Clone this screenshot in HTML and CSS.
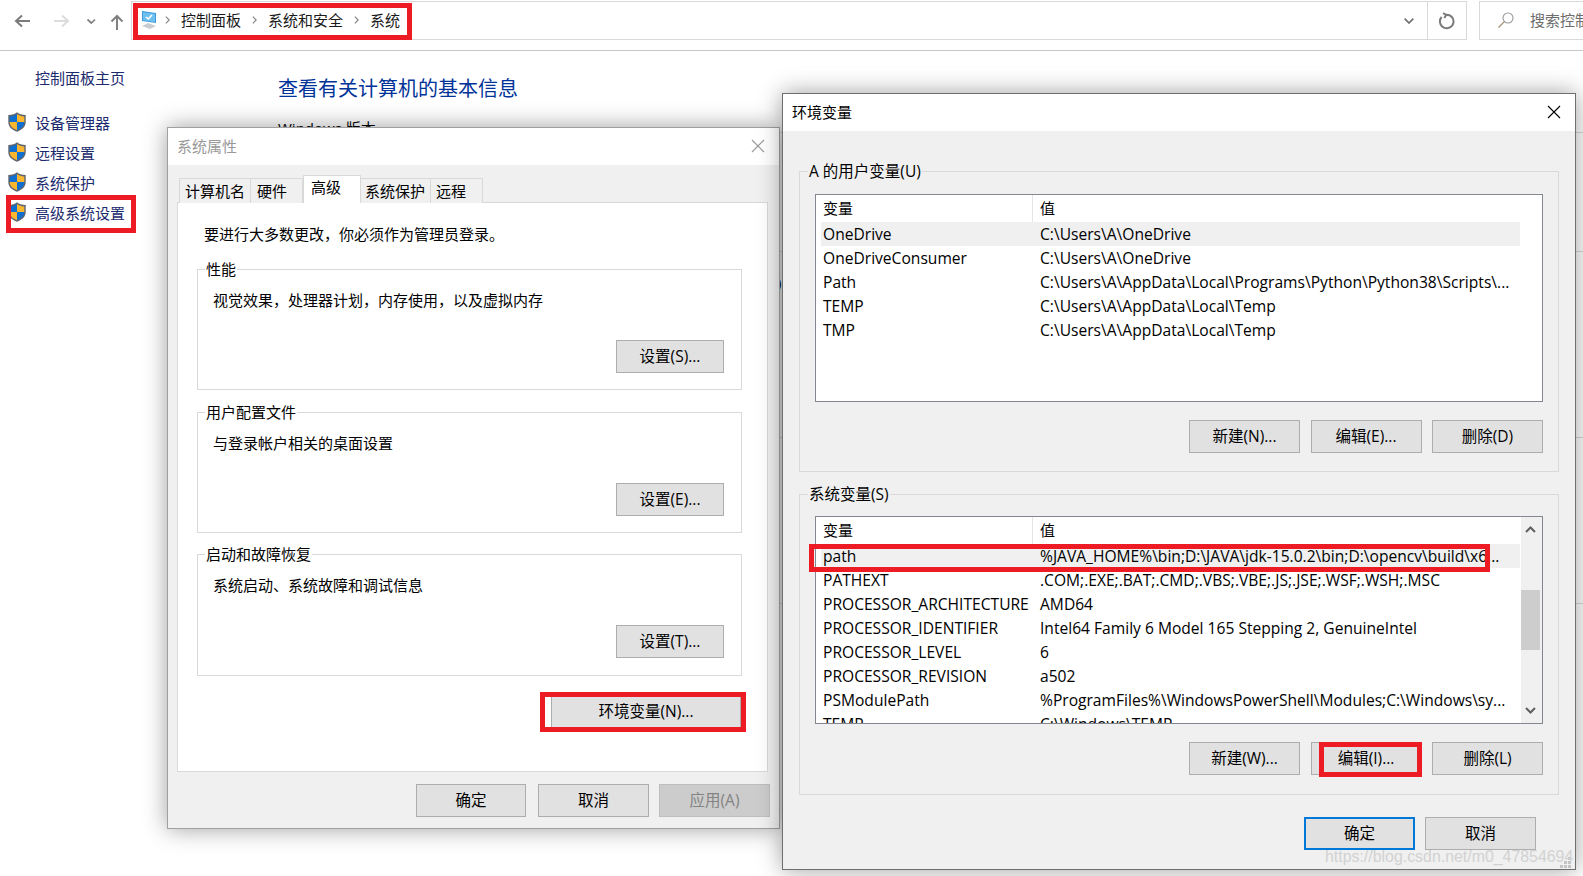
FILE: index.html
```html
<!DOCTYPE html>
<html lang="zh-CN">
<head>
<meta charset="utf-8">
<title>系统</title>
<link rel="stylesheet" href="styles.css">
</head>
<body>
<svg class="defs" width="0" height="0">
  <symbol id="shield" viewBox="0 0 18 20">
    <path d="M9 .3C11 2.100 14 3.100 17.700 3.100V10c0 4.800-3.600 7.800-8.700 9.700C3.900 17.800.3 14.800.3 10V3.100C4 3.100 7 2.100 9 .3Z" fill="#5f6670"/>
    <path d="M9 1.900C7 3.300 4.500 4.200 1.700 4.400V10H9Z" fill="#0f6fd0"/>
    <path d="M9 1.900C11 3.300 13.500 4.200 16.300 4.400V10H9Z" fill="#f9b62e"/>
    <path d="M1.700 10H9V18.200C4.800 16.500 1.700 14 1.700 10Z" fill="#f9b62e"/>
    <path d="M16.300 10H9V18.200C13.200 16.500 16.300 14 16.300 10Z" fill="#0f6fd0"/>
  </symbol>
  <symbol id="close" viewBox="0 0 14 14">
    <path d="M1 1 13 13M13 1 1 13" fill="none" stroke="currentColor" stroke-width="1.100"/>
  </symbol>
  <symbol id="crumb" viewBox="0 0 6 10">
    <path d="M1 1 5 5 1 9" fill="none" stroke="#8a8a8a" stroke-width="1.500"/>
  </symbol>
</svg>

<header class="toolbar">
  <svg class="nav-icons" width="131" height="40" viewBox="0 0 131 40">
    <path d="M30 21H16M22 15.500 16 21 22 26.500" fill="none" stroke="#7b7b7b" stroke-width="2"/>
    <path d="M54 21H68M62 15.500 68 21 62 26.500" fill="none" stroke="#dcdcdc" stroke-width="2"/>
    <path d="M87.500 19.500 91.300 23 95 19.500" fill="none" stroke="#808080" stroke-width="1.700"/>
    <path d="M117 30V16M111.500 21.500 117 16 122.500 21.500" fill="none" stroke="#808080" stroke-width="2"/>
  </svg>
  <div class="address">
    <svg class="pc-icon" width="16" height="20" viewBox="0 0 16 20">
      <path d="M1 1 15 3V13L1 11Z" fill="#3d9ade"/>
      <path d="M2 2.200 14 3.800V12L2 10.200Z" fill="#6fc0ef"/>
      <path d="M5 7 7.300 9 11 5" fill="none" stroke="#fff" stroke-width="1.600"/>
      <path d="M7 13 1 16 9 19 15 16Z" fill="#c9ccd0"/>
    </svg>
    <svg class="chev"><use href="#crumb"/></svg>
    <span class="crumb">控制面板</span>
    <svg class="chev"><use href="#crumb"/></svg>
    <span class="crumb">系统和安全</span>
    <svg class="chev"><use href="#crumb"/></svg>
    <span class="crumb">系统</span>
    <span class="address-fill"></span>
    <svg class="drop" width="10" height="6" viewBox="0 0 10 6"><path d="M.7.7 5 5 9.300.7" fill="none" stroke="#707070" stroke-width="1.700"/></svg>
    <span class="refresh">
      <svg width="18" height="18" viewBox="0 0 18 18"><path d="M8 2.700A6.800 6.800 0 1 1 3.600 5M5 1.200 8.300 2.800 6.300 6" fill="none" stroke="#7b7b7b" stroke-width="2"/></svg>
    </span>
  </div>
  <div class="search">
    <svg width="18" height="18" viewBox="0 0 18 18"><circle cx="11" cy="7" r="5" fill="none" stroke="#9a9a9a" stroke-width="1.100"/><path d="M7.400 10.600 1.500 16.500" stroke="#a08a70" stroke-width="1.200"/></svg>
    <span class="search-text">搜索控制面板</span>
  </div>
</header>

<main class="page">
  <nav class="sidebar">
    <a class="home">控制面板主页</a>
    <a class="side-link"><svg class="shield"><use href="#shield"/></svg>设备管理器</a>
    <a class="side-link"><svg class="shield"><use href="#shield"/></svg>远程设置</a>
    <a class="side-link"><svg class="shield"><use href="#shield"/></svg>系统保护</a>
    <a class="side-link"><svg class="shield"><use href="#shield"/></svg>高级系统设置</a>
  </nav>
  <section class="info">
    <h1>查看有关计算机的基本信息</h1>
    <p>Windows 版本</p>
  </section>
  <section class="rail">
    <div class="rail-a"></div>
    <div class="rail-b"></div>
    <div class="rail-c"><span>)</span></div>
    <div class="rail-d"></div>
  </section>
</main>

<div class="dialog props">
  <div class="titlebar inactive"><span>系统属性</span><svg class="x"><use href="#close"/></svg></div>
  <div class="dialog-body">
    <div class="tabs">
      <span class="tab t1">计算机名</span>
      <span class="tab t2">硬件</span>
      <span class="tab t3 active">高级</span>
      <span class="tab t4">系统保护</span>
      <span class="tab t5">远程</span>
    </div>
    <div class="panel">
      <p class="notice">要进行大多数更改，你必须作为管理员登录。</p>
      <div class="group white">
        <span class="legend">性能</span>
        <p class="group-text">视觉效果，处理器计划，内存使用，以及虚拟内存</p>
        <button class="btn setting">设置(S)...</button>
      </div>
      <div class="group white">
        <span class="legend">用户配置文件</span>
        <p class="group-text">与登录帐户相关的桌面设置</p>
        <button class="btn setting">设置(E)...</button>
      </div>
      <div class="group white last">
        <span class="legend">启动和故障恢复</span>
        <p class="group-text">系统启动、系统故障和调试信息</p>
        <button class="btn setting">设置(T)...</button>
      </div>
      <button class="btn env-btn">环境变量(N)...</button>
    </div>
    <div class="props-foot">
      <button class="btn w-a">确定</button>
      <button class="btn w-b">取消</button>
      <button class="btn w-b disabled">应用(A)</button>
    </div>
  </div>
</div>

<div class="dialog env">
  <div class="titlebar"><span>环境变量</span><svg class="x"><use href="#close"/></svg></div>
  <div class="dialog-body env-body">
    <div class="group gray">
      <span class="legend">A 的用户变量(U)</span>
      <div class="list">
        <div class="rows">
          <div class="row head"><span>变量</span><span>值</span></div>
          <div class="row sel"><span>OneDrive</span><span>C:\Users\A\OneDrive</span></div>
          <div class="row"><span>OneDriveConsumer</span><span>C:\Users\A\OneDrive</span></div>
          <div class="row"><span>Path</span><span>C:\Users\A\AppData\Local\Programs\Python\Python38\Scripts\...</span></div>
          <div class="row"><span>TEMP</span><span>C:\Users\A\AppData\Local\Temp</span></div>
          <div class="row"><span>TMP</span><span>C:\Users\A\AppData\Local\Temp</span></div>
        </div>
      </div>
      <div class="list-btns">
        <button class="btn w-c">新建(N)...</button>
        <button class="btn w-c">编辑(E)...</button>
        <button class="btn w-c">删除(D)</button>
      </div>
    </div>
    <div class="group gray">
      <span class="legend">系统变量(S)</span>
      <div class="list">
        <div class="rows">
          <div class="row head"><span>变量</span><span>值</span></div>
          <div class="row sel"><span>path</span><span>%JAVA_HOME%\bin;D:\JAVA\jdk-15.0.2\bin;D:\opencv\build\x6...</span></div>
          <div class="row"><span>PATHEXT</span><span>.COM;.EXE;.BAT;.CMD;.VBS;.VBE;.JS;.JSE;.WSF;.WSH;.MSC</span></div>
          <div class="row"><span>PROCESSOR_ARCHITECTURE</span><span>AMD64</span></div>
          <div class="row"><span>PROCESSOR_IDENTIFIER</span><span>Intel64 Family 6 Model 165 Stepping 2, GenuineIntel</span></div>
          <div class="row"><span>PROCESSOR_LEVEL</span><span>6</span></div>
          <div class="row"><span>PROCESSOR_REVISION</span><span>a502</span></div>
          <div class="row"><span>PSModulePath</span><span>%ProgramFiles%\WindowsPowerShell\Modules;C:\Windows\sy...</span></div>
          <div class="row"><span>TEMP</span><span>C:\Windows\TEMP</span></div>
        </div>
        <div class="scrollbar">
          <svg width="11" height="7" viewBox="0 0 11 7"><path d="M1 6 5.500 1.500 10 6" fill="none" stroke="#606060" stroke-width="2"/></svg>
          <span class="thumb"></span>
          <svg width="11" height="7" viewBox="0 0 11 7"><path d="M1 1 5.500 5.500 10 1" fill="none" stroke="#606060" stroke-width="2"/></svg>
        </div>
      </div>
      <div class="list-btns">
        <button class="btn w-c">新建(W)...</button>
        <button class="btn w-c">编辑(I)...</button>
        <button class="btn w-c">删除(L)</button>
      </div>
    </div>
    <div class="env-foot">
      <button class="btn w-c primary">确定</button>
      <button class="btn w-c">取消</button>
    </div>
  </div>
  <svg class="grip" width="12" height="11" viewBox="0 0 12 11"><path d="M8 0h3v3H8ZM4 4h3v3H4ZM8 4h3v3H8ZM0 8h3v3H0ZM4 8h3v3H4ZM8 8h3v3H8Z" fill="#c4c4c4"/></svg>
</div>

<div class="mark m-address"></div>
<div class="mark m-side"></div>
<div class="mark m-envbtn"></div>
<div class="mark m-path"></div>
<div class="mark m-edit"></div>
<div class="watermark">https://blog.csdn.net/m0_47854694</div>
</body>
</html>
```
FILE: styles.css
```css
* { box-sizing: border-box; }
html, body { margin: 0; padding: 0; }
body {
  position: relative;
  width: 1583px;
  height: 876px;
  overflow: hidden;
  background: #fff;
  color: #000;
  font-family: "Open Sans", "Noto Sans CJK SC", sans-serif;
  font-size: 14px;
}
p, h1 { margin: 0; font-weight: 400; }
.defs { position: absolute; }

/* Explorer toolbar */
.toolbar {
  display: flex;
  height: 51px;
  padding-top: 1px;
  border-bottom: 1px solid #c8c8c8;
  align-items: flex-start;
}
.nav-icons { flex: none; margin-top: -1px; }
.address {
  flex: none;
  display: flex;
  align-items: center;
  width: 1336px;
  height: 39px;
  padding: 0 0 2px 6px;
  gap: 11px;
  border: 1px solid #d9d9d9;
}
.pc-icon { flex: none; margin: 0 -3px 0 3px; }
.chev { flex: none; width: 5px; height: 10px; }
.crumb { font-size: 15px; line-height: 20px; white-space: nowrap; color: #1a1a1a; font-family: "Noto Sans CJK SC", sans-serif; }
.address-fill { flex: 1; }
.drop { flex: none; margin: 3px 1px 0 0; }
.refresh {
  flex: none;
  display: flex;
  align-items: center;
  justify-content: center;
  width: 39px;
  height: 37px;
  margin: 2px 0 0 1px;
  border-left: 1px solid #d9d9d9;
}
.search {
  flex: 1;
  min-width: 0;
  display: flex;
  align-items: center;
  gap: 15px;
  height: 39px;
  margin-left: 12px;
  padding: 0 0 2px 17px;
  overflow: hidden;
  border: 1px solid #d9d9d9;
  border-right: 0;
  color: #6d6d6d;
  font-size: 15px;
  font-family: "Noto Sans CJK SC", sans-serif;
}
.search svg { flex: none; }
.search-text { white-space: nowrap; }

/* Control panel page behind the dialogs */
.page { display: flex; height: 825px; }
.sidebar {
  flex: none;
  display: flex;
  flex-direction: column;
  width: 278px;
  padding-left: 8px;
  color: #1c2a6e;
  font-family: "Noto Sans CJK SC", sans-serif;
  font-size: 15px;
}
.home { margin: 17px 0 19px 27px; line-height: 20px; }
.side-link { display: flex; align-items: center; gap: 9px; height: 30px; white-space: nowrap; }
.shield { flex: none; width: 18px; height: 20px; }
.info { flex: none; width: 480px; }
.info h1 { margin-top: 23px; font-size: 20px; line-height: 28px; color: #003399; font-family: "Noto Sans CJK SC", sans-serif; }
.info p { margin-top: 16px; font-size: 15px; line-height: 20px; }
.rail { flex: 1; }
.rail div { border-bottom: 1px solid #d9d9d9; }
.rail-a { height: 82px; }
.rail-b { height: 119px; }
.rail-c { height: 186px; padding: 20px 0 0 19px; line-height: 20px; font-size: 15px; }
.rail-d { height: 166px; }

/* Dialog windows */
.dialog {
  position: absolute;
  display: flex;
  flex-direction: column;
  background: #f0f0f0;
  border: 1px solid #6f6f6f;
  box-shadow: 0 0 22px rgba(0, 0, 0, .38);
  font-size: 15px;
}
.props { left: 167px; top: 127px; width: 613px; height: 702px; border-color: #a0a0a0; }
.env { left: 782px; top: 93px; width: 794px; height: 777px; }
.titlebar {
  flex: none;
  display: flex;
  align-items: center;
  justify-content: space-between;
  height: 37px;
  padding: 0 14px 2px 9px;
  background: #fff;
  font-family: "Noto Sans CJK SC", sans-serif;
}
.titlebar.inactive { color: #999; }
.x { width: 14px; height: 14px; }
.inactive .x { color: #999; }
.dialog-body { flex: 1; display: flex; flex-direction: column; min-height: 0; }

/* Tabs */
.tabs { display: flex; align-items: flex-end; height: 38px; margin: 0 0 -1px 11px; position: relative; }
.tab {
  height: 25px;
  padding-left: 5px;
  border: 1px solid #d9d9d9;
  border-left: 0;
  border-bottom: 0;
  background: #f0f0f0;
  line-height: 23px;
  white-space: nowrap;
  font-family: "Noto Sans CJK SC", sans-serif;
}
.t1 { width: 72px; border-left: 1px solid #d9d9d9; }
.t2 { width: 52px; padding-left: 6px; }
.t3 { width: 58px; }
.t4 { width: 70px; padding-left: 4px; }
.t5 { width: 52px; }
.tab.active { height: 28px; padding-left: 7px; margin-left: 0; background: #fff; line-height: 22px; border-left: 1px solid #d9d9d9; padding-bottom: 4px; }

/* Property panel */
.panel {
  display: flex;
  flex-direction: column;
  align-items: flex-start;
  width: 591px;
  height: 570px;
  margin-left: 9px;
  padding: 21px 26px 0 19px;
  background: #fff;
  border: 1px solid #d9d9d9;
  font-family: "Noto Sans CJK SC", sans-serif;
}
.notice { margin: 0 0 0 7px; line-height: 20px; white-space: nowrap; }
.group { border: 1px solid #d9d9d9; flex: none; }
.group.white { display: flex; flex-direction: column; width: 545px; height: 121px; margin-top: 22px; padding: 0 17px 0 15px; background: #fff; }
.panel .notice + .group { margin-top: 25px; }
.group.white.last { height: 122px; margin-top: 21px; }
.legend { align-self: flex-start; padding: 0 1px; line-height: 20px; background: inherit; white-space: nowrap; font-family: "Open Sans", "Noto Sans CJK SC", sans-serif; }
.white .legend { margin: -11px 0 0 -8px; }
.group-text { margin-top: 11px; line-height: 20px; white-space: nowrap; }
.setting { align-self: flex-end; width: 108px; margin-top: 30px; }
.env-btn { align-self: flex-end; width: 190px; height: 34px; margin-top: 19px; }

/* Buttons */
.btn {
  display: block;
  height: 33px;
  padding: 0;
  background: #e1e1e1;
  border: 1px solid #adadad;
  border-radius: 0;
  color: #000;
  font: 15.500px/1 "Open Sans", "Noto Sans CJK SC", sans-serif;
  white-space: nowrap;
}
.btn.disabled { background: #cccccc; border-color: #bfbfbf; color: #838383; }
.btn.primary { border: 2px solid #0078d7; }
.w-a { width: 110px; margin-right: 2px; }
.w-b { width: 111px; }
.w-c { width: 111px; }
.props-foot { display: flex; gap: 10px; justify-content: flex-end; padding: 12px 9px 0 0; }

/* Environment dialog */
.env-body { padding: 40px 16px 0; position: relative; }
.group.gray { display: flex; flex-direction: column; height: 301px; padding: 0 15px; background: #f0f0f0; }
.group.gray + .group.gray { margin-top: 22px; }
.gray .legend { margin: -11px 0 0 -7px; font-size: 15.500px; }
.list {
  display: flex;
  height: 208px;
  margin-top: 13px;
  padding-left: 5px;
  overflow: hidden;
  background: #fff;
  border: 1px solid #828790;
}
.group.gray + .group.gray .list { margin-top: 12px; }
.rows { flex: none; width: 699px; overflow: hidden; font-size: 15.600px; }
.row { display: flex; height: 24px; line-height: 24px; white-space: nowrap; }
.row span:first-child { flex: none; width: 212px; padding-left: 2px; overflow: hidden; }
.row span:last-child { padding-left: 7px; }
.row.head { height: 27px; line-height: 25px; font-size: 15px; font-family: "Noto Sans CJK SC", sans-serif; }
.row.head span:first-child { border-right: 1px solid #e5e5e5; }
.row.sel { background: #f0f0f0; }
.scrollbar {
  flex: 1;
  display: flex;
  flex-direction: column;
  align-items: center;
  margin-left: 1px;
  padding: 9px 2px 9px 0;
  background: #f0f0f0;
}
.thumb { flex: none; width: 100%; height: 60px; margin: 57px 0 auto; background: #cdcdcd; }
.list-btns { display: flex; gap: 10.500px; justify-content: flex-end; margin-top: 18px; }
.env-foot { display: flex; gap: 10px; justify-content: flex-end; margin-top: 22px; padding-right: 23px; }
.grip { position: absolute; right: 3px; bottom: 1px; }

/* Red annotations drawn over the screenshot */
.mark { position: absolute; border: 5px solid #ed1c24; pointer-events: none; }
.m-address { left: 133px; top: 3px; width: 279px; height: 37px; }
.m-side { left: 6px; top: 195px; width: 130px; height: 38px; }
.m-envbtn { left: 540px; top: 692px; width: 206px; height: 40px; }
.m-path { left: 809px; top: 544px; width: 681px; height: 28px; }
.m-edit { left: 1319px; top: 742px; width: 103px; height: 35px; }
.watermark {
  position: absolute;
  left: 1325px;
  top: 847px;
  font: 15.900px/20px "Liberation Sans", sans-serif;
  color: #d2d2d2;
  white-space: nowrap;
}
```
